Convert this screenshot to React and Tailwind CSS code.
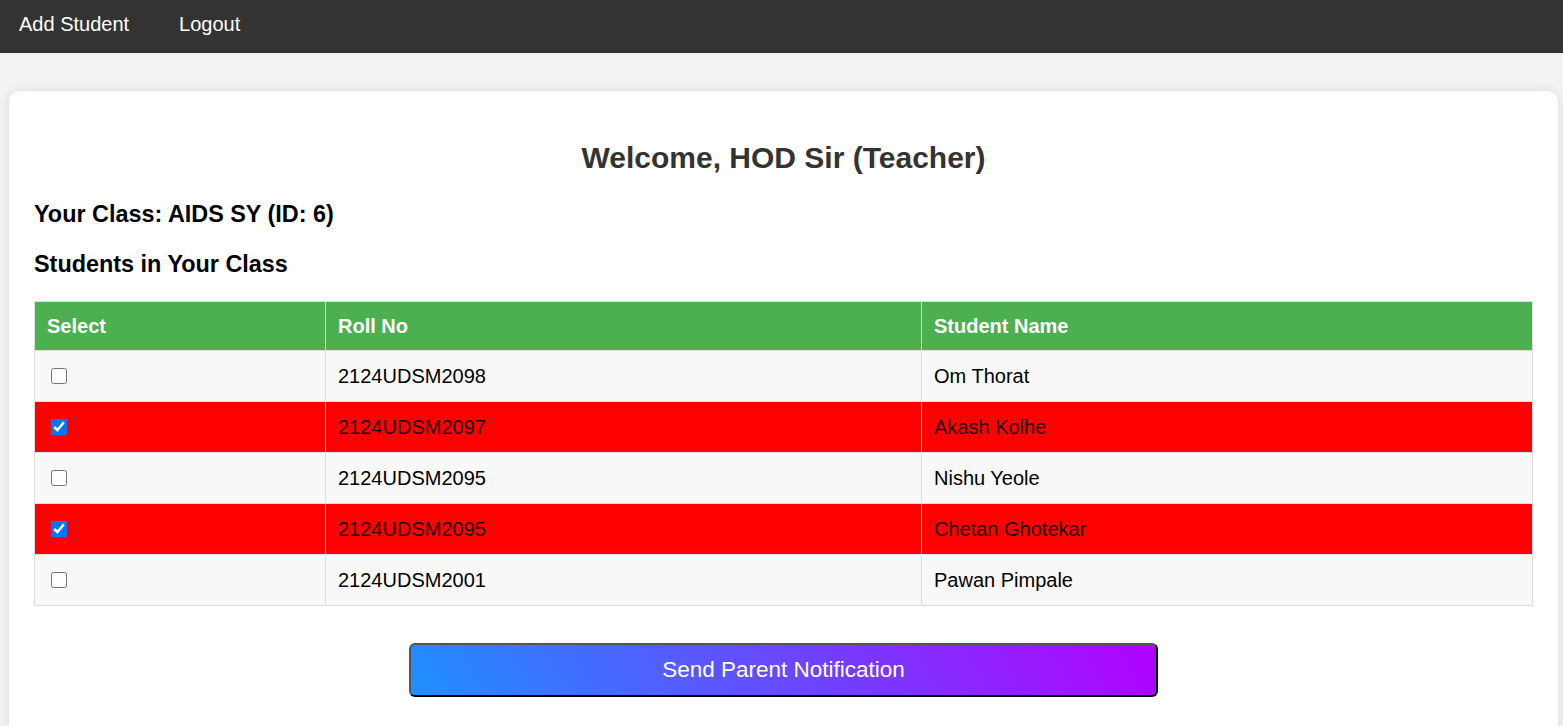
import { useState } from "react";

const students = [
  { roll: "2124UDSM2098", name: "Om Thorat", checked: false },
  { roll: "2124UDSM2097", name: "Akash Kolhe", checked: true },
  { roll: "2124UDSM2095", name: "Nishu Yeole", checked: false },
  { roll: "2124UDSM2095", name: "Chetan Ghotekar", checked: true },
  { roll: "2124UDSM2001", name: "Pawan Pimpale", checked: false },
];

export default function App() {
  const [rows, setRows] = useState(students);

  const toggle = (i) => {
    setRows(rows.map((r, idx) => (idx === i ? { ...r, checked: !r.checked } : r)));
  };

  return (
    <div className="min-h-screen bg-[#f3f3f3] font-['Liberation_Sans',Arial,sans-serif]">
      {/* Navbar */}
      <nav className="h-[53px] bg-[#333] flex items-start gap-[50px] px-[19px] pt-[13px]">
        <a className="text-white text-[20px] leading-[23px] cursor-pointer">Add Student</a>
        <a className="text-white text-[20px] leading-[23px] cursor-pointer">Logout</a>
      </nav>

      {/* Card */}
      <div className="mt-[38px] ml-[9px] mr-[5px] bg-white rounded-[10px] shadow-[0_0_12px_rgba(0,0,0,0.1)] px-[25px] pt-[25px] pb-[40px]">
        <h2 className="text-center text-[30px] leading-[34px] font-bold text-[#333] mt-[25px]">
          Welcome, HOD Sir (Teacher)
        </h2>
        <h3 className="text-[23.4px] leading-[27px] font-bold text-black mt-[26px]">
          Your Class: AIDS SY (ID: 6)
        </h3>
        <h3 className="text-[23.4px] leading-[27px] font-bold text-black mt-[23px]">
          Students in Your Class
        </h3>

        {/* Table */}
        <table className="w-full mt-[23px] border-collapse table-fixed text-[20px]">
          <thead>
            <tr className="bg-[#4caf50] text-white">
              <th className="w-[291px] h-[49px] border border-[#ddd] px-[12px] text-left font-bold">Select</th>
              <th className="w-[596px] h-[49px] border border-[#ddd] px-[12px] text-left font-bold">Roll No</th>
              <th className="h-[49px] border border-[#ddd] px-[12px] text-left font-bold">Student Name</th>
            </tr>
          </thead>
          <tbody>
            {rows.map((s, i) => (
              <tr key={i} className={s.checked ? "bg-[#ff0000] text-[#1a0000]" : "bg-[#f8f8f8] text-black"}>
                <td className="h-[51px] border border-[#ddd] px-[12px]">
                  <input
                    type="checkbox"
                    checked={s.checked}
                    onChange={() => toggle(i)}
                    className="block w-4 h-4 ml-[4px] accent-[#0075ff]"
                  />
                </td>
                <td className="h-[51px] border border-[#ddd] px-[12px]">{s.roll}</td>
                <td className="h-[51px] border border-[#ddd] px-[12px]">{s.name}</td>
              </tr>
            ))}
          </tbody>
        </table>

        {/* Button */}
        <div className="flex justify-center mt-[37px]">
          <button className="w-1/2 h-[54px] rounded-[6px] border-2 border-t-[#555] border-l-[#555] border-r-black border-b-black bg-[linear-gradient(60deg,#1e90ff,#b300ff)] text-white text-[22.5px]">
            Send Parent Notification
          </button>
        </div>
      </div>
    </div>
  );
}
